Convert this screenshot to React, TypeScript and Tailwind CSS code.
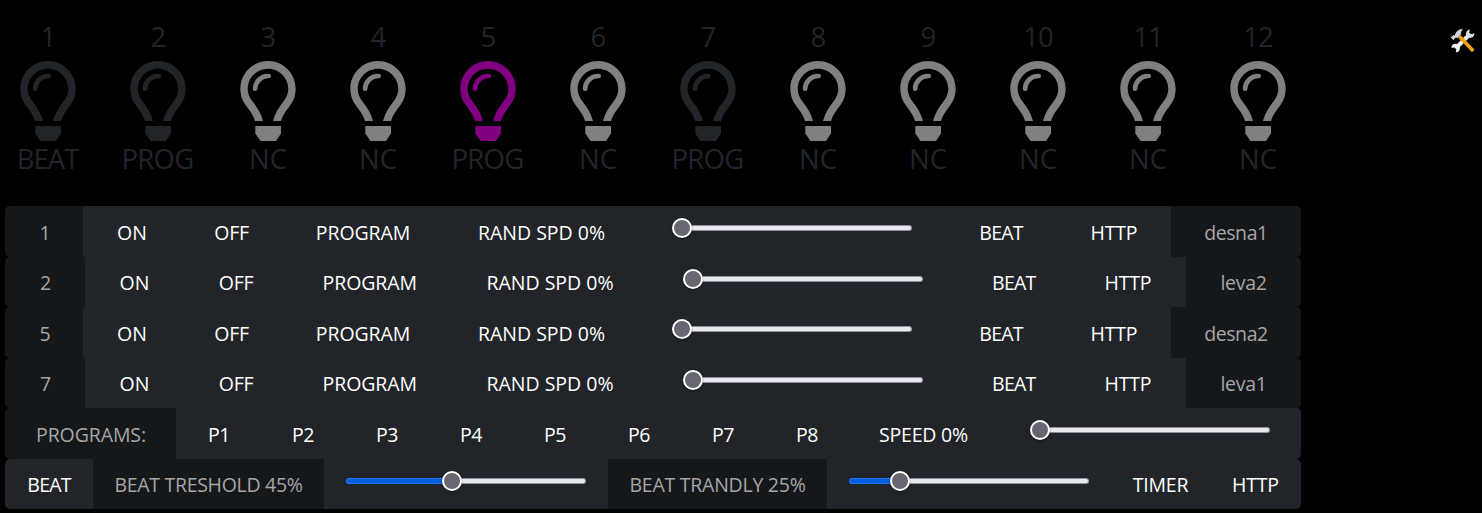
import React from "react";

type Tone = "dim" | "grey" | "purple";

const TONES: Record<Tone, string> = {
  dim: "text-[#212529]",
  grey: "text-[#808080]",
  purple: "text-[#800080]",
};

const BULBS: { mode: string; tone: Tone; track: string }[] = [
  { mode: "BEAT", tone: "dim", track: "-ml-px tracking-[-1px]" },
  { mode: "PROG", tone: "dim", track: "-ml-px tracking-[-0.7px]" },
  { mode: "NC", tone: "grey", track: "tracking-[-0.1px]" },
  { mode: "NC", tone: "grey", track: "tracking-[-0.1px]" },
  { mode: "PROG", tone: "purple", track: "-ml-px tracking-[-0.7px]" },
  { mode: "NC", tone: "grey", track: "tracking-[-0.1px]" },
  { mode: "PROG", tone: "dim", track: "-ml-px tracking-[-0.7px]" },
  { mode: "NC", tone: "grey", track: "tracking-[-0.1px]" },
  { mode: "NC", tone: "grey", track: "tracking-[-0.1px]" },
  { mode: "NC", tone: "grey", track: "tracking-[-0.1px]" },
  { mode: "NC", tone: "grey", track: "tracking-[-0.1px]" },
  { mode: "NC", tone: "grey", track: "tracking-[-0.1px]" },
];

function Bulb({ tone }: { tone: Tone }) {
  return (
    <svg width="56" height="80" viewBox="0 0 56 80" className={TONES[tone]} fill="none" stroke="currentColor">
      <path
        stroke="none"
        fill="currentColor"
        d="M28 0C12.500 0 .3 12.500 .3 28c0 6.500 2.200 12.200 6 17C10.600 50.500 13.300 54.500 15 60h8C21 52.500 17.500 46.800 12.600 40.500 9.600 36.800 7.700 32.600 7.700 28c0-11.200 9-20.300 20.300-20.300S48.300 16.800 48.300 28c0 4.600-1.900 8.800-4.900 12.500C38.500 46.800 35 52.500 33 60h8c1.700-5.500 4.400-9.500 8.700-15 3.800-4.800 6-10.500 6-17C55.700 12.500 43.500 0 28 0Z"
      />
      <path stroke="none" fill="currentColor" d="M15.300 65H41v7.500L36 80H20.500l-5.200-7.500z" />
      <path strokeWidth="4.700" strokeLinecap="round" d="M15.100 27.700a13 13 0 0 1 13-12.700h0.600" />
    </svg>
  );
}

function Tools() {
  return (
    <svg width="26" height="26" viewBox="0 0 26 26" fill="none">
      <path d="M6 20 19.500 6.500" stroke="#e8eaee" strokeWidth="4" />
      <path d="M24.300 5.300a4.200 4.200 0 1 1-4.500-3.800l-.6 3.300 2 1.400z" fill="#d8dde4" />
      <path d="M1.500 19.900a4.200 4.200 0 1 1 4.300 4.300l.5-2.900-2-1.700z" fill="#eef0f3" />
      <path d="m9.300 8.300 14 14.600" stroke="#f2a20c" strokeWidth="3.600" />
      <path d="M.7 9.800 3.300 6.900 4.800 7.400C5.800 3.600 9 .6 13.300 1 11.500 2.200 10.700 4.100 11.200 6.100l-3.600 4-1.800-.5-2.300 2.500z" fill="#cfd4dc" />
    </svg>
  );
}

function Cell({ w, children, muted, round = "", track = "" }: {
  w: string;
  children: React.ReactNode;
  muted?: boolean;
  round?: string;
  track?: string;
}) {
  return (
    <button
      disabled={muted}
      className={`${w} ${round} ${track} shrink-0 whitespace-nowrap pt-[2.2px] text-center ${
        muted ? "bg-[#15181b] text-[#a6a6a6]" : "bg-[#212529] text-white"
      }`}
    >
      {children}
    </button>
  );
}

function Slider({ w, fill, round = "" }: { w: string; fill?: string; round?: string }) {
  return (
    <div className={`${w} ${round} flex shrink-0 justify-center bg-[#212529] pt-3`}>
      <div className="flex h-5 w-60 items-center">
        {fill && <div className={`${fill} h-[6px] shrink-0 rounded-l-[3px] border border-r-0 border-[#2374ff] bg-[#0060df]`} />}
        <div
          className={`z-10 size-5 shrink-0 rounded-full border-2 border-white bg-[#676774] shadow-[0_1px_2px_rgba(0,0,0,0.5)] ${
            fill ? "-ml-[10px]" : ""
          }`}
        />
        <div className="-ml-[10px] h-[6px] grow rounded-r-[3px] border border-l-0 border-[#8f8f9d] bg-[#e9e9ed]" />
      </div>
    </div>
  );
}

const ROW = "flex h-[50.5px] w-[1296px]";

function WideRow({ id, name }: { id: string; name: string }) {
  return (
    <div className={ROW}>
      <Cell w="w-[78px]" muted round="rounded-l-[5px] pl-[2px]">{id}</Cell>
      <Cell w="w-[98px]">ON</Cell>
      <Cell w="w-[101px]" track="tracking-[-0.3px]">OFF</Cell>
      <Cell w="w-[162px]" track="tracking-[-0.1px]">PROGRAM</Cell>
      <Cell w="w-[195px]">RAND SPD 0%</Cell>
      <Slider w="w-[306px]" />
      <Cell w="w-[112px]" track="tracking-[-0.8px]">BEAT</Cell>
      <Cell w="w-[114px]" track="tracking-[-0.2px]">HTTP</Cell>
      <Cell w="w-[130px]" muted round="rounded-r-[5px]" track="tracking-[-0.4px]">{name}</Cell>
    </div>
  );
}

function NarrowRow({ id, name }: { id: string; name: string }) {
  return (
    <div className={ROW}>
      <Cell w="w-[80px]" muted round="rounded-l-[5px] pl-px">{id}</Cell>
      <Cell w="w-[99px]">ON</Cell>
      <Cell w="w-[104px]" track="tracking-[-0.3px]">OFF</Cell>
      <Cell w="w-[163.500px]" track="tracking-[-0.1px]">PROGRAM</Cell>
      <Cell w="w-[197px]">RAND SPD 0%</Cell>
      <Slider w="w-[309px]" />
      <Cell w="w-[112.500px]" track="tracking-[-0.8px]">BEAT</Cell>
      <Cell w="w-[116px]" track="tracking-[-0.2px]">HTTP</Cell>
      <Cell w="w-[115px]" muted round="rounded-r-[5px]" track="tracking-[-0.3px]">{name}</Cell>
    </div>
  );
}

export default function App() {
  return (
    <div className="h-[513px] w-[1482px] overflow-hidden bg-black font-['Open_Sans',sans-serif]">
      <header className="flex h-[206.25px] justify-between pl-[5px] pr-[6px]">
        <div className="flex gap-6 pt-[16px] text-[27.5px] leading-[42px] text-[#212529]">
          {BULBS.map((b, i) => (
            <div key={i} className="flex w-[86px] flex-col items-center">
              <span className="h-[45px] tracking-[-0.9px]">{i + 1}</span>
              <Bulb tone={b.tone} />
              <span className={`-mt-[3px] whitespace-nowrap ${b.track}`}>{b.mode}</span>
            </div>
          ))}
        </div>
        <div className="pt-7">
          <Tools />
        </div>
      </header>
      <main className="pl-[5px] text-[19.5px]">
        <WideRow id="1" name="desna1" />
        <NarrowRow id="2" name="leva2" />
        <WideRow id="5" name="desna2" />
        <NarrowRow id="7" name="leva1" />
        <div className={ROW}>
          <Cell w="w-[171px]" muted round="rounded-l-[5px] pl-px" track="tracking-[-0.1px]">PROGRAMS:</Cell>
          {["P1", "P2", "P3", "P4", "P5", "P6", "P7", "P8"].map((p) => (
            <Cell key={p} w="w-[84px]" track="pl-[2px] tracking-[-0.4px]">{p}</Cell>
          ))}
          <Cell w="w-[151px]" track="tracking-[-0.2px]">SPEED 0%</Cell>
          <Slider w="w-[302px]" round="rounded-r-[5px]" />
        </div>
        <div className={ROW}>
          <Cell w="w-[88px]" round="rounded-l-[5px]" track="tracking-[-0.8px]">BEAT</Cell>
          <Cell w="w-[231px]" muted track="tracking-[-0.3px]">BEAT TRESHOLD 45%</Cell>
          <Slider w="w-[284px]" fill="w-[106px]" />
          <Cell w="w-[219px]" muted track="tracking-[-0.25px]">BEAT TRANDLY 25%</Cell>
          <Slider w="w-[284px]" fill="w-[51px]" />
          <Cell w="w-[99px]" track="tracking-[-0.2px]">TIMER</Cell>
          <Cell w="w-[91px]" round="rounded-r-[5px]" track="tracking-[-0.2px]">HTTP</Cell>
        </div>
      </main>
    </div>
  );
}
